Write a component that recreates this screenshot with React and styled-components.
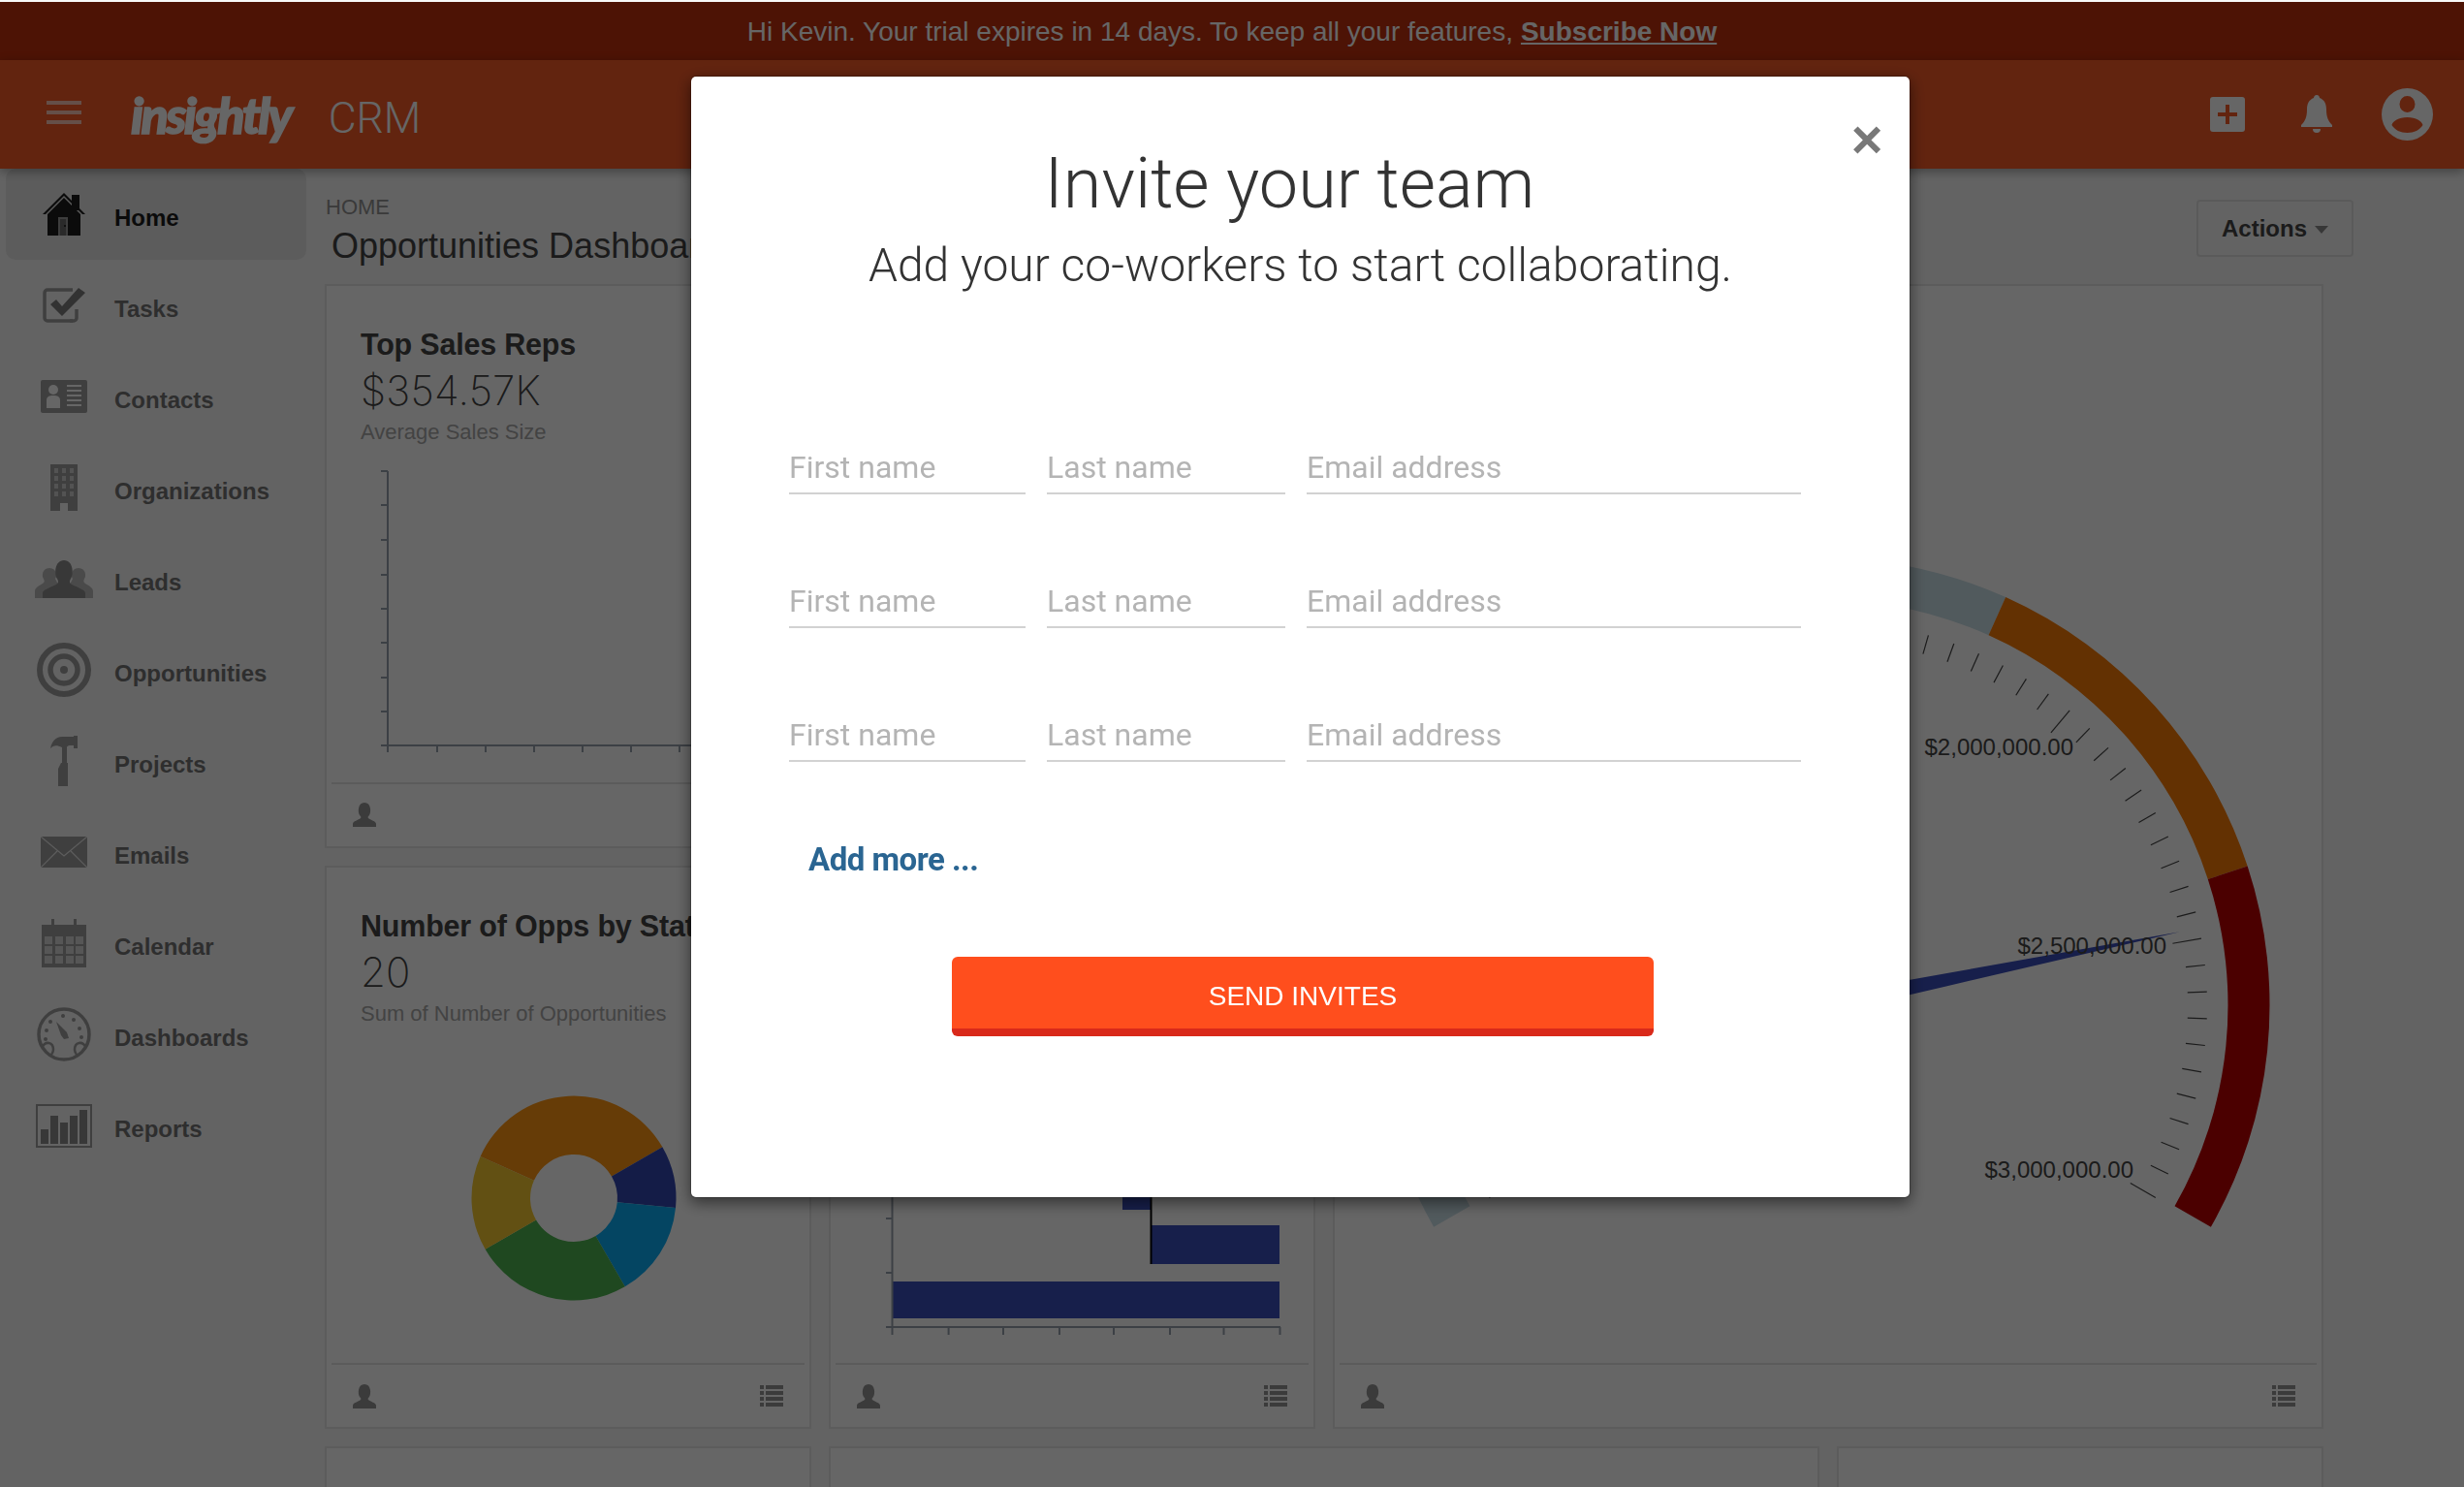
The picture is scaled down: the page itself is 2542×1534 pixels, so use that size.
import React from "react";
import styled, { createGlobalStyle } from "styled-components";

const GlobalStyle = createGlobalStyle`
  html, body { margin: 0; padding: 0; background: #f8f8f8; overflow: hidden; }
  body { font-family: "Liberation Sans", Arial, sans-serif; }
  * { box-sizing: border-box; }
`;

const Page = styled.div`
  width: 2542px;
  height: 1534px;
  overflow: hidden;
  padding-top: 2px;
  background: #f8f8f8;
`;

const Banner = styled.div`
  height: 60px;
  background: #c1300d;
  color: #fff;
  font-size: 28px;
  display: flex;
  align-items: center;
  justify-content: center;
  padding-top: 1px;
  gap: 8px;
  & > a { color: #fff; font-weight: 700; text-decoration: underline; }
`;

const Header = styled.header`
  height: 112px;
  background: #f55a27;
  display: flex;
  align-items: center;
  padding-left: 48px;
  position: relative;
  box-shadow: 0 3px 10px rgba(0, 0, 0, 0.35);
`;

const Burger = styled.div`
  width: 36px;
  display: flex;
  flex-direction: column;
  gap: 6px;
  margin-top: -4px;
  & > span { height: 4px; background: rgba(255, 255, 255, 0.65); }
`;

const Logo = styled.div`
  font-family: "Lato", sans-serif;
  font-weight: 900;
  font-style: italic;
  font-size: 52px;
  letter-spacing: -2.6px;
  color: #fff;
  margin-left: 51px;
  margin-top: 0;
  -webkit-text-stroke: 1.5px #fff;
`;

const Product = styled.div`
  font-family: "Roboto", sans-serif;
  font-weight: 300;
  font-size: 44.5px;
  color: #fff;
  margin-left: 39px;
  margin-top: 8px;
`;

const HeaderIcons = styled.div`
  margin-left: auto;
  display: flex;
  align-items: center;
  padding-right: 32px;
`;

const Layout = styled.div`
  display: flex;
`;

const Sidebar = styled.nav`
  width: 335px;
  flex: none;
  padding-left: 6px;
`;

const NavItem = styled.div`
  width: 310px;
  height: 94px;
  display: flex;
  align-items: center;
  border-radius: 10px;
  background: ${(p) => (p.$active ? "#e6e6e6" : "transparent")};
  color: ${(p) => (p.$active ? "#1c1c1c" : "#747474")};
  font-size: 24px;
  font-weight: 700;
`;

const NavIcon = styled.span`
  width: 60px;
  margin-left: 30px;
  display: flex;
  justify-content: center;
  flex: none;
`;

const NavLabel = styled.span`
  margin-left: 22px;
  padding-top: 8px;
`;

const Main = styled.main`
  width: 2207px;
  flex: none;
`;

const MainHeader = styled.div`
  height: 119px;
  width: 2093px;
  display: flex;
  justify-content: space-between;
`;

const Crumb = styled.div`
  font-size: 22px;
  line-height: 24px;
  color: #919191;
  margin-top: 28px;
  margin-left: 1px;
`;

const PageTitle = styled.h1`
  font-size: 36px;
  font-weight: 400;
  line-height: 40px;
  color: #444;
  margin: 8px 0 0 7px;
`;

const ActionsButton = styled.div`
  width: 162px;
  height: 59px;
  margin-top: 32px;
  border: 2px solid #e2e2e2;
  border-radius: 4px;
  display: flex;
  align-items: center;
  justify-content: center;
  gap: 8px;
  font-size: 24px;
  font-weight: 700;
  color: #444;
  & > i { border: 7px solid transparent; border-top: 8px solid #8a8a8a; border-bottom: 0; margin-top: 2px; }
`;

const CardGrid = styled.div`
  width: 2062px;
  display: grid;
  grid-template-columns: repeat(4, 1fr);
  grid-auto-rows: 581.5px;
  gap: 18px 17.5px;
`;

const Card = styled.section`
  grid-column: span ${(p) => p.$span || 1};
  grid-row: span ${(p) => p.$rows || 1};
  background: #fff;
  border: 2px solid #e6e6e6;
  display: flex;
  flex-direction: column;
`;

const CardBody = styled.div`
  flex: 1;
  min-height: 0;
  overflow: hidden;
`;

const CardHead = styled.div`
  padding: 43px 0 0 35px;
  white-space: nowrap;
`;

const CardTitle = styled.h2`
  font-size: 30.5px;
  line-height: 34px;
  font-weight: 700;
  letter-spacing: -0.2px;
  color: #444;
  margin: 0;
`;

const CardValue = styled.div`
  font-family: "Inter", sans-serif;
  font-weight: 200;
  font-size: 42px;
  line-height: 50px;
  letter-spacing: 0.2px;
  color: #444;
  margin-top: 6px;
`;

const CardSub = styled.div`
  font-size: 22px;
  line-height: 26px;
  color: #a8a8a8;
  margin-top: 5px;
`;

const CardFooter = styled.div`
  flex: none;
  height: 66px;
  margin: 0 5px;
  padding: 0 22px;
  border-top: 2px solid #e3e3e3;
  display: flex;
  align-items: center;
  justify-content: space-between;
`;

const ChartSvg = styled.svg`
  display: block;
  margin-top: ${(p) => p.$top || 0}px;
`;

const Overlay = styled.div`
  position: fixed;
  inset: 2px 0 0 0;
  background: rgba(0, 0, 0, 0.6);
`;

const Modal = styled.div`
  position: relative;
  width: 1259px;
  height: 1158px;
  margin: 76px 0 0 712px;
  background: #fff;
  background-clip: padding-box;
  border: 1px solid rgba(0, 0, 0, 0.2);
  border-radius: 6px;
  box-shadow: 0 5px 15px rgba(0, 0, 0, 0.5);
  padding-top: 69px;
  font-family: "Roboto", sans-serif;
`;

const CloseButton = styled.div`
  position: absolute;
  top: 45px;
  right: 24px;
  width: 40px;
  height: 40px;
  display: flex;
  align-items: center;
  justify-content: center;
  font-family: "Liberation Sans", sans-serif;
  font-weight: 700;
  font-size: 56px;
  line-height: 40px;
  color: #787878;
`;

const ModalTitle = styled.h1`
  margin: 0;
  padding-right: 22px;
  text-align: center;
  font-weight: 300;
  font-size: 72px;
  line-height: 84px;
  color: #333;
`;

const ModalSub = styled.p`
  margin: 14px 0 0;
  text-align: center;
  font-weight: 300;
  font-size: 48px;
  line-height: 56px;
  color: #333;
`;

const InviteList = styled.div`
  margin: 154px 0 0 101px;
  display: flex;
  flex-direction: column;
  gap: 84px;
`;

const InviteRow = styled.div`
  display: grid;
  grid-template-columns: 244px 246px 510px;
  gap: 22px;
`;

const Field = styled.input`
  height: 54px;
  padding: 0;
  border: 0;
  border-bottom: 2px solid #d2d2d2;
  outline: none;
  background: transparent;
  font-family: "Roboto", sans-serif;
  font-size: 32px;
  width: 100%;
  &::placeholder { color: #b4b4b4; opacity: 1; }
`;

const AddMore = styled.div`
  margin: 81px 0 0 121px;
  font-size: 33px;
  line-height: 40px;
  font-weight: 700;
  letter-spacing: -0.5px;
  color: #2a6592;
`;

const SendButton = styled.div`
  margin: 80px 0 0 269px;
  width: 724px;
  height: 82px;
  background: #ff4e1d;
  border-bottom: 8px solid #d9291a;
  border-radius: 6px;
  display: flex;
  align-items: center;
  justify-content: center;
  padding-top: 8px;
  font-family: "Liberation Sans", sans-serif;
  font-size: 28px;
  color: #fff;
`;

const MUTED = "#9e9e9e";

const HomeIcon = () => (
  <svg width="44" height="44" viewBox="0 0 44 44">
    <path d="M30 2h8v16h-8z" fill="#1c1c1c" />
    <path d="M22 0 44 22H41L22 3 3 22H0z" fill="#1c1c1c" />
    <path d="M22 5 39 22V44H5V22z" fill="#1c1c1c" />
    <path d="M16 25h10v19H16z" fill="#9a9a9a" />
    <path d="M18 27h6v17h-6z" fill="#6a6a6a" />
    <circle cx="23" cy="34" r="1" fill="#111" />
  </svg>
);

const TasksIcon = () => (
  <svg width="44" height="36" viewBox="0 0 44 36">
    <path d="M31 34H5a3 3 0 0 1-3-3V5a3 3 0 0 1 3-3h26" fill="none" stroke={MUTED} strokeWidth="3.5" />
    <path d="M35 22v9a3 3 0 0 1-3 3h-4" fill="none" stroke={MUTED} strokeWidth="3.5" />
    <path d="M8 17l6-5 6 7L37 0l7 5-24 24z" fill="#7e7e7e" />
  </svg>
);

const ContactsIcon = () => (
  <svg width="48" height="34" viewBox="0 0 48 34">
    <path d="M0 2a2 2 0 0 1 2-2h44a2 2 0 0 1 2 2v30a2 2 0 0 1-2 2H2a2 2 0 0 1-2-2z" fill={MUTED} />
    <circle cx="13" cy="10" r="5" fill="#fff" />
    <path d="M6 29V21c0-4 3-5 7-5s7 1 7 5v8z" fill="#fff" />
    <path d="M27 5h15v2H27zM27 10h15v2H27zM27 15h15v2H27zM27 20h15v2H27zM27 25h15v2H27z" fill="#fff" />
  </svg>
);

const OrgIcon = () => (
  <svg width="28" height="48" viewBox="0 0 28 48">
    <path d="M0 0h28v48H18V40H10v8H0z" fill={MUTED} />
    {[4, 12, 20].map((x) =>
      [4, 12, 20, 28].map((y) => <rect key={x + "-" + y} x={x} y={y} width="4" height="5" fill="#cfcfcf" />)
    )}
  </svg>
);

const LeadsIcon = () => (
  <svg width="60" height="39" viewBox="0 0 60 39">
    <path d="M0 39V32c0-4 5-6 8-8 2-1 2-3 1-5-2-2-2-11 6-11s8 9 6 11l10 20z" fill="#b8b8b8" />
    <path d="M60 39V32c0-4-5-6-8-8-2-1-2-3-1-5 2-2 2-11-6-11s-8 9-6 11L29 39z" fill="#b8b8b8" />
    <path d="M8 39v-5c0-4 9-6 14-9 3-2 2-4 1-6-3-4-3-19 7-19s10 15 7 19c-1 2-2 4 1 6 5 3 14 5 14 9v5z" fill="#8c8c8c" />
  </svg>
);

const TargetIcon = () => (
  <svg width="56" height="56" viewBox="0 0 56 56">
    <circle cx="28" cy="28" r="25" fill="none" stroke={MUTED} strokeWidth="6" />
    <circle cx="28" cy="28" r="14" fill="none" stroke={MUTED} strokeWidth="5.5" />
    <circle cx="28" cy="28" r="4" fill={MUTED} />
  </svg>
);

const HammerIcon = () => (
  <svg width="28" height="52" viewBox="0 0 28 52">
    <path d="M0 13C1 6 6 1 12 1h12V0h4v13h-4v-3h-4c-2 0-3 1-3 2v16h-5V12C6 9 3 10 0 13z" fill={MUTED} />
    <path d="M11 28h7v24H8V34z" fill={MUTED} />
  </svg>
);

const MailIcon = () => (
  <svg width="48" height="32" viewBox="0 0 48 32">
    <path d="M0 0h48v32H0z" fill={MUTED} />
    <path d="M0 0l24 20L48 0M0 32l17-17M48 32L31 15" fill="none" stroke="#e8e8e8" strokeWidth="1.2" />
  </svg>
);

const CalendarIcon = () => (
  <svg width="46" height="50" viewBox="0 0 46 50">
    <path d="M10 0h3v6h-3zM33 0h3v6h-3z" fill={MUTED} />
    <path d="M0 6h46v44H0z" fill={MUTED} />
    {[3, 14, 25, 35].map((x) =>
      [18, 28, 38].map((y) => <rect key={x + "-" + y} x={x} y={y} width="8" height="8" fill="#d8d8d8" />)
    )}
  </svg>
);

const GaugeNavIcon = () => (
  <svg width="56" height="56" viewBox="0 0 56 56">
    <circle cx="28" cy="28" r="26" fill="none" stroke={MUTED} strokeWidth="3.5" />
    <path d="M5 42c4-8 12-6 12 2 0 3-2 5-3 6M51 42c-4-8-12-6-12 2 0 3 2 5 3 6" fill="none" stroke={MUTED} strokeWidth="2.5" />
    <path d="M20 15l11 11 2 6-5 1-3-4z" fill={MUTED} />
    {[[10, 24], [14, 15], [27, 9], [38, 13], [44, 22], [46, 31], [9, 33]].map(([x, y]) => (
      <circle key={x} cx={x} cy={y} r="2" fill={MUTED} />
    ))}
  </svg>
);

const ReportsIcon = () => (
  <svg width="58" height="45" viewBox="0 0 58 45">
    <rect x="1" y="1" width="56" height="43" fill="none" stroke={MUTED} strokeWidth="2" />
    <path d="M5 26h8v15H5zM15 12h8v29h-8zM25 19h8v22h-8zM35 12h8v29h-8zM45 6h8v35h-8z" fill="#8c8c8c" />
  </svg>
);

const PersonIcon = () => (
  <svg width="24" height="25" viewBox="0 0 24 25">
    <path d="M0 25v-3c0-3 6-4 8-6 1-1 0-2-1-3C5 10 5 0 12 0s7 10 5 13c-1 1-2 2-1 3 2 2 8 3 8 6v3z" fill="#939393" />
  </svg>
);

const ListIcon = () => (
  <svg width="24" height="22" viewBox="0 0 24 22">
    {[0, 6, 12, 18].map((y) => (
      <g key={y} fill="#939393">
        <rect x="0" y={y} width="4" height="4" />
        <rect x="6" y={y} width="18" height="4" />
      </g>
    ))}
  </svg>
);

const PlusIcon = () => (
  <svg width="36" height="36" viewBox="0 0 36 36" style={{ marginRight: 58 }}>
    <rect width="36" height="36" rx="3" fill="#fff" />
    <path d="M16 8h4v8h8v4h-8v8h-4v-8H8v-4h8z" fill="#f55a27" />
  </svg>
);

const BellIcon = () => (
  <svg width="32" height="40" viewBox="0 0 32 40" style={{ marginRight: 51 }}>
    <path d="M16 0c2 0 3 1.500 3 3 5 2 7 6 7 12 0 8 2 12 6 16v2H0v-2c4-4 6-8 6-16 0-6 2-10 7-12 0-1.500 1-3 3-3z" fill="#fff" />
    <path d="M12 35h8a4 4 0 0 1-8 0z" fill="#fff" />
  </svg>
);

const AvatarIcon = () => (
  <svg width="53" height="54" viewBox="0 0 53 54">
    <path fillRule="evenodd" d="M26.500 0a26.500 27 0 1 1 0 54 26.500 27 0 0 1 0-54zM26.500 8a8 8.500 0 1 0 0 17 8 8.500 0 0 0 0-17zM26.500 30c-9 0-15 4-16 8 3 5 9 8 16 8s13-3 16-8c-1-4-7-8-16-8z" fill="#fff" />
  </svg>
);

const NAV = [
  ["Home", HomeIcon],
  ["Tasks", TasksIcon],
  ["Contacts", ContactsIcon],
  ["Organizations", OrgIcon],
  ["Leads", LeadsIcon],
  ["Opportunities", TargetIcon],
  ["Projects", HammerIcon],
  ["Emails", MailIcon],
  ["Calendar", CalendarIcon],
  ["Dashboards", GaugeNavIcon],
  ["Reports", ReportsIcon],
];

const polar = (cx, cy, r, deg) => {
  const a = (deg * Math.PI) / 180;
  return [cx + r * Math.cos(a), cy + r * Math.sin(a)];
};

// ring slice, angles in degrees, 0 = east, clockwise
const slice = (cx, cy, r0, r1, a0, a1) => {
  const [x0, y0] = polar(cx, cy, r1, a0);
  const [x1, y1] = polar(cx, cy, r1, a1);
  const [x2, y2] = polar(cx, cy, r0, a1);
  const [x3, y3] = polar(cx, cy, r0, a0);
  const large = a1 - a0 > 180 ? 1 : 0;
  return `M${x0} ${y0}A${r1} ${r1} 0 ${large} 1 ${x1} ${y1}L${x2} ${y2}A${r0} ${r0} 0 ${large} 0 ${x3} ${y3}Z`;
};

const SalesChart = () => (
  <ChartSvg width="498" height="320" $top={11}>
    <g transform="translate(-337,-470)" stroke="#97a0ac" strokeWidth="2" fill="none">
      <path d="M400 486V776M393 769H830" />
      {[486, 521, 557, 593, 628, 663, 699, 734].map((y) => (
        <path key={y} d={`M393 ${y}H400`} />
      ))}
      {[451, 501, 551, 601, 651, 701, 751, 801].map((x) => (
        <path key={x} d={`M${x} 769V776`} />
      ))}
    </g>
  </ChartSvg>
);

const DONUT = [
  [-66, 60, "#ff9612"],
  [60, 95.5, "#3448b2"],
  [95.5, 150, "#0aacf5"],
  [150, 240, "#4eb450"],
  [240, 294, "#f5c830"],
];

const StatusDonut = () => (
  <ChartSvg width="498" height="300" $top={11}>
    <g transform="translate(-337,-1070)">
      {DONUT.map(([a0, a1, color]) => (
        <path key={a0} d={slice(592, 1236, 45, 105.500, a0 - 90, a1 - 90)} fill={color} />
      ))}
    </g>
  </ChartSvg>
);

const BarsChart = () => (
  <ChartSvg width="498" height="510">
    <g transform="translate(-857,-895)">
      <rect x="920" y="1322" width="400" height="38" fill="#3a4ebc" />
      <rect x="1187" y="1264" width="133" height="40" fill="#3a4ebc" />
      <rect x="1158" y="1200" width="29" height="48" fill="#3a4ebc" />
      <path d="M1187.500 1200V1304" stroke="#000" strokeWidth="2" />
      <g stroke="#97a0ac" strokeWidth="2" fill="none">
        <path d="M920.500 1150V1377M914 1369H1321" />
        <path d="M914 1257H920M914 1313H920" />
        {[978.600, 1035, 1093, 1149, 1207, 1262.500, 1320.500].map((x) => (
          <path key={x} d={`M${x} 1369V1377`} />
        ))}
      </g>
    </g>
  </ChartSvg>
);

const CX = 1880;
const CY = 1037;
const gaugeTicks = [];
for (let i = 0; i <= 60; i++) gaugeTicks.push(i);

const Gauge = () => {
  const tip = polar(CX, CY, 376.600, -11.600);
  const b0 = polar(CX, CY, 10, 78.400);
  const b1 = polar(CX, CY, 10, -101.600);
  return (
    <ChartSvg width="1018" height="1040">
      <g transform="translate(-1377,-295)">
        <path d={slice(CX, CY, 418.500, 461.500, -209.700, -65.800)} fill="#cbe0e8" />
        <path d={slice(CX, CY, 418.500, 461.500, -65.800, -18.100)} fill="#f87a05" />
        <path d={slice(CX, CY, 418.500, 461.500, -18.100, 29.700)} fill="#bb0000" />
        {gaugeTicks.map((i) => {
          const a = -210 + i * 4;
          const [x0, y0] = polar(CX, CY, i % 10 === 0 ? 367 : 377, a);
          const [x1, y1] = polar(CX, CY, 397, a);
          return <line key={i} x1={x0} y1={y0} x2={x1} y2={y1} stroke="#444" strokeWidth="1.200" />;
        })}
        <polygon points={`${tip[0]},${tip[1]} ${b0[0]},${b0[1]} ${b1[0]},${b1[1]}`} fill="#3a4ebc" />
        <g fontFamily="Liberation Sans, sans-serif" fontSize="24" fill="#444" textAnchor="end">
          <text x="2139" y="779">$2,000,000.00</text>
          <text x="2235" y="984">$2,500,000.00</text>
          <text x="2201" y="1215">$3,000,000.00</text>
        </g>
      </g>
    </ChartSvg>
  );
};

const Footer = ({ list = true }) => (
  <CardFooter>
    <PersonIcon />
    {list && <ListIcon />}
  </CardFooter>
);

const ROWS = [0, 1, 2];

const App = () => (
  <Page>
    <GlobalStyle />
    <Banner>
      <span>Hi Kevin. Your trial expires in 14 days. To keep all your features,</span>
      <a>Subscribe Now</a>
    </Banner>
    <Header>
      <Burger>
        <span />
        <span />
        <span />
      </Burger>
      <Logo>insightly</Logo>
      <Product>CRM</Product>
      <HeaderIcons>
        <PlusIcon />
        <BellIcon />
        <AvatarIcon />
      </HeaderIcons>
    </Header>
    <Layout>
      <Sidebar>
        {NAV.map(([label, Icon], i) => (
          <NavItem key={label} $active={i === 0}>
            <NavIcon>
              <Icon />
            </NavIcon>
            <NavLabel>{label}</NavLabel>
          </NavItem>
        ))}
      </Sidebar>
      <Main>
        <MainHeader>
          <div>
            <Crumb>HOME</Crumb>
            <PageTitle>Opportunities Dashboard</PageTitle>
          </div>
          <ActionsButton>
            Actions
            <i />
          </ActionsButton>
        </MainHeader>
        <CardGrid>
          <Card>
            <CardBody>
              <CardHead>
                <CardTitle>Top Sales Reps</CardTitle>
                <CardValue>$354.57K</CardValue>
                <CardSub>Average Sales Size</CardSub>
              </CardHead>
              <SalesChart />
            </CardBody>
            <Footer />
          </Card>
          <Card />
          <Card $span={2} $rows={2}>
            <CardBody>
              <Gauge />
            </CardBody>
            <Footer />
          </Card>
          <Card>
            <CardBody>
              <CardHead>
                <CardTitle>Number of Opps by Status</CardTitle>
                <CardValue>20</CardValue>
                <CardSub>Sum of Number of Opportunities</CardSub>
              </CardHead>
              <StatusDonut />
            </CardBody>
            <Footer />
          </Card>
          <Card>
            <CardBody>
              <BarsChart />
            </CardBody>
            <Footer />
          </Card>
          <Card />
          <Card $span={2} />
          <Card />
        </CardGrid>
      </Main>
    </Layout>
    <Overlay>
      <Modal>
        <CloseButton>×</CloseButton>
        <ModalTitle>Invite your team</ModalTitle>
        <ModalSub>Add your co-workers to start collaborating.</ModalSub>
        <InviteList>
          {ROWS.map((r) => (
            <InviteRow key={r}>
              <Field placeholder="First name" />
              <Field placeholder="Last name" />
              <Field placeholder="Email address" />
            </InviteRow>
          ))}
        </InviteList>
        <AddMore>Add more ...</AddMore>
        <SendButton>SEND INVITES</SendButton>
      </Modal>
    </Overlay>
  </Page>
);

export default App;
